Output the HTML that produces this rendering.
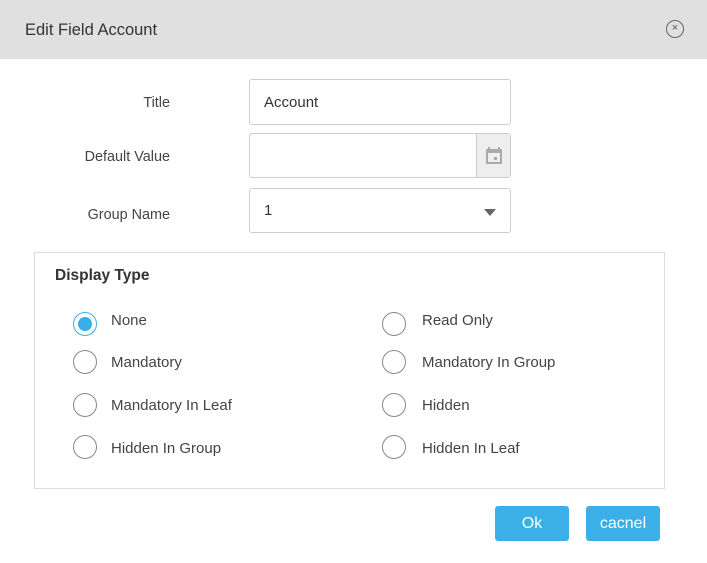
<!DOCTYPE html>
<html><head><style>
*{box-sizing:border-box;margin:0;padding:0}
body{width:707px;height:563px;background:#fff;font-family:"Liberation Sans","DejaVu Sans",sans-serif;color:#333;position:relative;overflow:hidden}
.hdr{position:absolute;left:0;top:0;width:707px;height:59px;background:#e1e0e1;}
.hdr span{position:absolute;left:25px;top:21px;font-size:16.5px;color:#333}
.close{position:absolute;left:666px;top:20px;width:18px;height:18px;border:1.3px solid #666;border-radius:50%;font-size:11px;line-height:15px;text-align:center;color:#555}
.lbl{position:absolute;font-size:14.4px;color:#444;text-align:right;width:170px;left:0}
.inp{position:absolute;left:249px;width:262px;border:1px solid #ccc;border-radius:3px;background:#fff;font-size:15px;padding-left:14px}
.cal{position:absolute;right:0;top:0;width:34px;height:100%;background:#eee;border-left:1px solid #ccc}
.box{position:absolute;left:34px;top:252px;width:631px;height:237px;border:1px solid #ddd}
.box h3{position:absolute;left:20px;top:14px;font-size:15.5px;font-weight:bold;color:#333}
.r{position:absolute;width:24px;height:24px;border:1.3px solid #888;border-radius:50%}
.r.on{border-color:#3aaee6}
.r.on:after{content:"";position:absolute;left:4px;top:4px;width:14px;height:14px;border-radius:50%;background:#3aaee6}
.t{position:absolute;font-size:15px;color:#444}
.btn{position:absolute;top:506px;width:74px;height:35px;background:#3bb0e8;border-radius:3px;color:#fff;font-size:16px;text-align:center;line-height:35px}
</style></head><body>
<div class="hdr"><span>Edit Field Account</span><div class="close">×</div></div>
<div class="lbl" style="top:95px">Title</div>
<div class="inp" style="top:79px;height:46px;line-height:46px">Account</div>
<div class="lbl" style="top:149px">Default Value</div>
<div class="inp" style="top:133px;height:45px"><div class="cal"><svg width="34" height="43" viewBox="0 0 34 43"><rect x="9" y="15" width="16" height="15" fill="#aaa"/><rect x="11" y="19" width="12" height="9" fill="#eee"/><rect x="11" y="13" width="2" height="4" fill="#aaa"/><rect x="21" y="13" width="2" height="4" fill="#aaa"/><rect x="17" y="23" width="3" height="3" fill="#aaa"/></svg></div></div>
<div class="lbl" style="top:207px">Group Name</div>
<div class="inp" style="top:188px;height:45px;line-height:44px">1<svg style="position:absolute;right:14px;top:20px" width="12" height="7"><path d="M0 0H12L6 7Z" fill="#666"/></svg></div>
<div class="box"><h3>Display Type</h3></div>
<div class="r on" style="left:73px;top:312px"></div><div class="t" style="left:111px;top:312px">None</div>
<div class="r" style="left:382px;top:312px"></div><div class="t" style="left:422px;top:312px">Read Only</div>
<div class="r" style="left:73px;top:350px"></div><div class="t" style="left:111px;top:354px">Mandatory</div>
<div class="r" style="left:382px;top:350px"></div><div class="t" style="left:422px;top:354px">Mandatory In Group</div>
<div class="r" style="left:73px;top:393px"></div><div class="t" style="left:111px;top:397px">Mandatory In Leaf</div>
<div class="r" style="left:382px;top:393px"></div><div class="t" style="left:422px;top:397px">Hidden</div>
<div class="r" style="left:73px;top:435px"></div><div class="t" style="left:111px;top:440px">Hidden In Group</div>
<div class="r" style="left:382px;top:435px"></div><div class="t" style="left:422px;top:440px">Hidden In Leaf</div>
<div class="btn" style="left:495px">Ok</div>
<div class="btn" style="left:586px">cacnel</div>
</body></html>
